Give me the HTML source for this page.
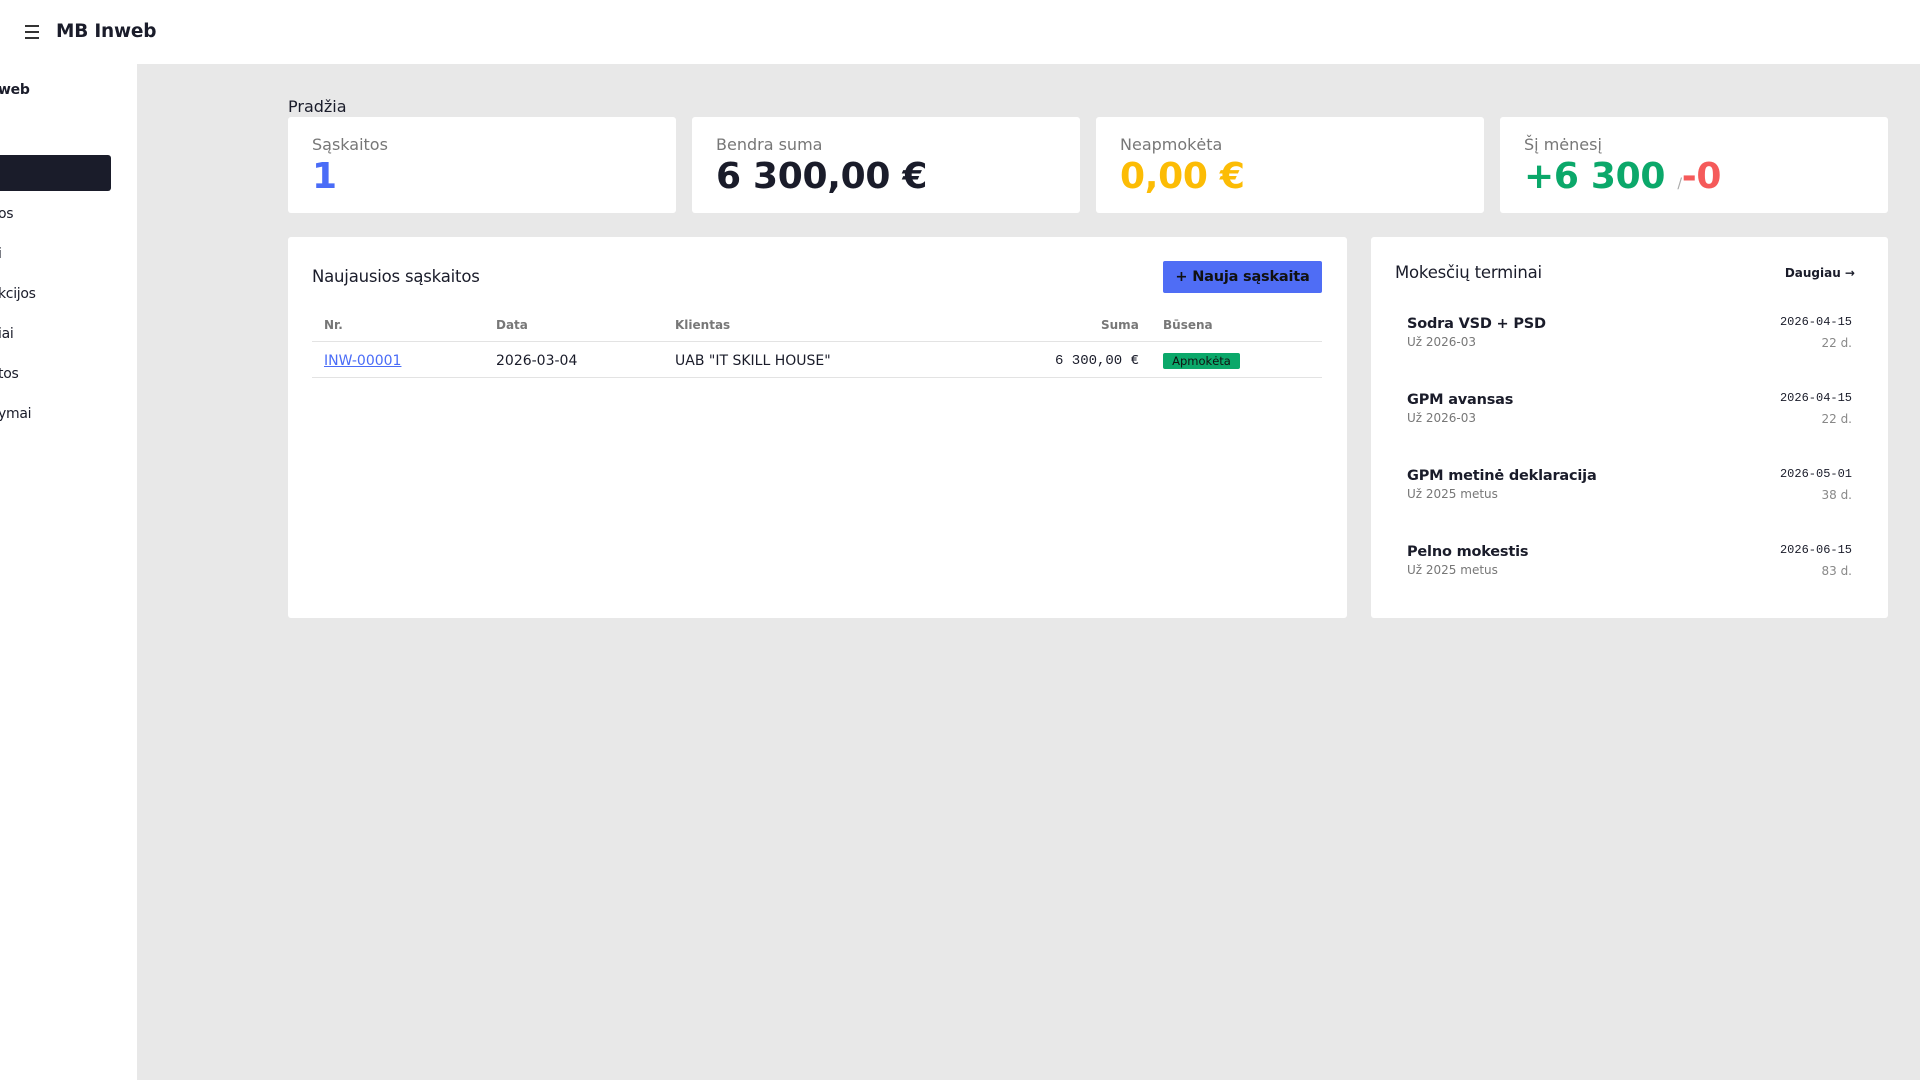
<!DOCTYPE html>
<html><head><meta charset="utf-8"><style>
*{box-sizing:border-box;margin:0;padding:0}
body{width:1920px;height:1080px;overflow:hidden;background:#e8e8e8;font-family:"DejaVu Sans","Liberation Sans",sans-serif;color:#1a1c2a;position:relative}
.hdr{position:absolute;left:0;top:0;width:1920px;height:64px;background:#fff}
.ham{position:absolute;left:25px;top:25px;width:14px}
.ham i{display:block;height:2px;background:#333;margin-bottom:4px}
.brand{position:absolute;left:56px;top:21px;font-size:18.5px;font-weight:bold;letter-spacing:-0.2px}
.side{position:absolute;left:0;top:64px;width:137px;height:1016px;background:#fff}
.side div{position:absolute;font-size:14px;left:-2px;letter-spacing:-0.3px}
.act{position:absolute;left:0;top:91px;width:113px;height:36px;background:#1a1c2a;border-radius:0 3px 3px 0}
.t{position:absolute}
.card{position:absolute;background:#fff;border-radius:3px}
.lbl{position:absolute;left:24px;top:18px;font-size:16px;color:#777}
.val{position:absolute;left:24px;top:39px;font-size:36px;font-weight:bold;letter-spacing:-0.3px}
.th{position:absolute;top:81px;font-size:12px;font-weight:bold;color:#777}
.td{position:absolute;top:116px;font-size:14px}
.mono{font-family:"Liberation Mono","DejaVu Sans Mono",monospace}
.it{position:absolute;left:36px;right:36px;height:50px}
.it b{position:absolute;left:0;top:0;font-size:14.5px;letter-spacing:-0.2px}
.it s{text-decoration:none;position:absolute;left:0;top:19px;font-size:12px;color:#777}
.it em{font-style:normal;position:absolute;right:0;top:-1px;font-size:12px;font-family:"Liberation Mono",monospace}
.it u{text-decoration:none;position:absolute;right:0;top:20px;font-size:12px;color:#888}
</style></head><body>
<div class="hdr"><div class="ham"><i></i><i></i><i></i></div><div class="brand">MB Inweb</div></div>
<div class="side">
<div style="top:18px;font-weight:bold">web</div>
<div class="act"></div>
<div style="top:142px">os</div>
<div style="top:182px">i</div>
<div style="top:222px">kcijos</div>
<div style="top:262px">iai</div>
<div style="top:302px">tos</div>
<div style="top:342px">ymai</div>
</div>
<div class="t" style="left:288px;top:97px;font-size:16px">Pradžia</div>
<div class="card" style="left:288px;top:117px;width:388px;height:96px"><div class="lbl">Sąskaitos</div><div class="val" style="color:#4a6cf7">1</div></div>
<div class="card" style="left:692px;top:117px;width:388px;height:96px"><div class="lbl">Bendra suma</div><div class="val">6 300,00 €</div></div>
<div class="card" style="left:1096px;top:117px;width:388px;height:96px"><div class="lbl">Neapmokėta</div><div class="val" style="color:#fcbc05">0,00 €</div></div>
<div class="card" style="left:1500px;top:117px;width:388px;height:96px"><div class="lbl">Šį mėnesį</div><div class="val"><span style="color:#0ba86a">+6 300</span> <span style="font-size:14px;color:#aaa;font-weight:normal">/</span><span style="color:#f55a5a">-0</span></div></div>
<div class="card" style="left:288px;top:237px;width:1059px;height:381px">
<div class="t" style="left:24px;top:30px;font-size:16.5px;letter-spacing:-0.2px">Naujausios sąskaitos</div>
<div class="t" style="left:875px;top:24px;width:159px;height:32px;background:#4f6df5;border-radius:2px;font-size:14.5px;font-weight:bold;text-align:center;line-height:32px;color:#111;letter-spacing:-0.2px">+ Nauja sąskaita</div>
<div class="th" style="left:36px">Nr.</div><div class="th" style="left:208px">Data</div><div class="th" style="left:387px">Klientas</div><div class="th" style="left:813px">Suma</div><div class="th" style="left:875px">Būsena</div>
<div class="t" style="left:24px;top:104px;width:1010px;height:1px;background:#e3e3e3"></div>
<div class="td" style="left:36px;color:#4a6cf7;text-decoration:underline">INW-00001</div>
<div class="td" style="left:208px">2026-03-04</div>
<div class="td" style="left:387px">UAB "IT SKILL HOUSE"</div>
<div class="td mono" style="right:208px;font-size:14px">6 300,00 €</div>
<div class="t" style="left:875px;top:116px;width:77px;height:16px;background:#0ba86a;border-radius:2px;font-size:11.5px;text-align:center;line-height:16px;color:#111">Apmokėta</div>
<div class="t" style="left:24px;top:140px;width:1010px;height:1px;background:#e3e3e3"></div>
</div>
<div class="card" style="left:1371px;top:237px;width:517px;height:381px">
<div class="t" style="left:24px;top:26px;font-size:16.5px;letter-spacing:-0.2px">Mokesčių terminai</div>
<div class="t" style="right:33px;top:29px;font-size:12px;font-weight:bold">Daugiau →</div>
<div class="it" style="top:79px"><b>Sodra VSD + PSD</b><s>Už 2026-03</s><em>2026-04-15</em><u>22 d.</u></div>
<div class="it" style="top:155px"><b>GPM avansas</b><s>Už 2026-03</s><em>2026-04-15</em><u>22 d.</u></div>
<div class="it" style="top:231px"><b>GPM metinė deklaracija</b><s>Už 2025 metus</s><em>2026-05-01</em><u>38 d.</u></div>
<div class="it" style="top:307px"><b>Pelno mokestis</b><s>Už 2025 metus</s><em>2026-06-15</em><u>83 d.</u></div>
</div>
</body></html>
